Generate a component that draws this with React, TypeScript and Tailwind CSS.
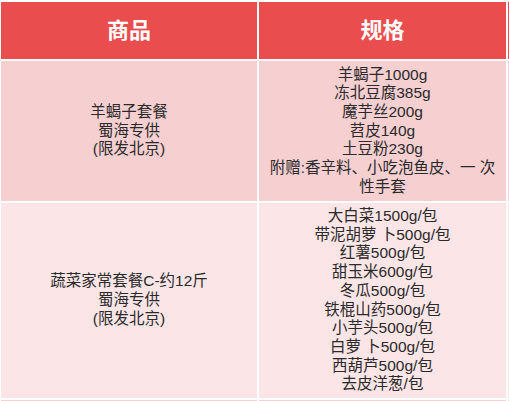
const font = { fontFamily: '"Liberation Sans", "Noto Sans CJK SC", sans-serif' }

const rows = [
  {
    name: ["羊蝎子套餐", "蜀海专供", "(限发北京)"],
    specs: ["羊蝎子1000g", "冻北豆腐385g", "魔芋丝200g", "苕皮140g", "土豆粉230g", "附赠:香辛料、小吃泡鱼皮、一 次", "性手套"],
    bg: "bg-[#f6cfd1]",
    h: "h-[140px]",
  },
  {
    name: ["蔬菜家常套餐C-约12斤", "蜀海专供", "(限发北京)"],
    specs: [
      "大白菜1500g/包",
      "带泥胡萝 卜500g/包",
      "红薯500g/包",
      "甜玉米600g/包",
      "冬瓜500g/包",
      "铁棍山药500g/包",
      "小芋头500g/包",
      "白萝 卜500g/包",
      "西葫芦500g/包",
      "去皮洋葱/包",
    ],
    bg: "bg-[#fbe5e6]",
    h: "h-[195px]",
  },
]

export default function App() {
  return (
    <div className="w-[509px] h-[401px] bg-white pt-[2px] pl-px overflow-hidden" style={font}>
      <div className="grid grid-cols-[256px_247px_1fr] gap-[2px]">
        <div className="h-[57px] bg-[#e94d4e] flex items-center justify-center text-white text-[22px] font-bold">商品</div>
        <div className="h-[57px] bg-[#e94d4e] flex items-center justify-center text-white text-[22px] font-bold">规格</div>
        <div className="h-[57px] bg-[#e94d4e]" />

        {rows.map((r, i) => (
          <div key={i} className="contents">
            <div className={`${r.h} ${r.bg} flex flex-col items-center justify-center text-[15.5px] leading-[18.7px] text-[#2a2a2a]`}>
              {r.name.map((t, j) => (
                <div key={j}>{t}</div>
              ))}
            </div>
            <div className={`${r.h} ${r.bg} flex flex-col items-center justify-center text-[15.5px] leading-[18.7px] text-[#2a2a2a] whitespace-pre`}>
              {r.specs.map((t, j) => (
                <div key={j}>{t}</div>
              ))}
            </div>
            <div className={`${r.h} ${r.bg}`} />
          </div>
        ))}

        <div className="h-[4px] bg-[#f6cfd1]" />
        <div className="h-[4px] bg-[#f6cfd1]" />
        <div className="h-[4px] bg-[#f6cfd1]" />
      </div>
    </div>
  )
}
